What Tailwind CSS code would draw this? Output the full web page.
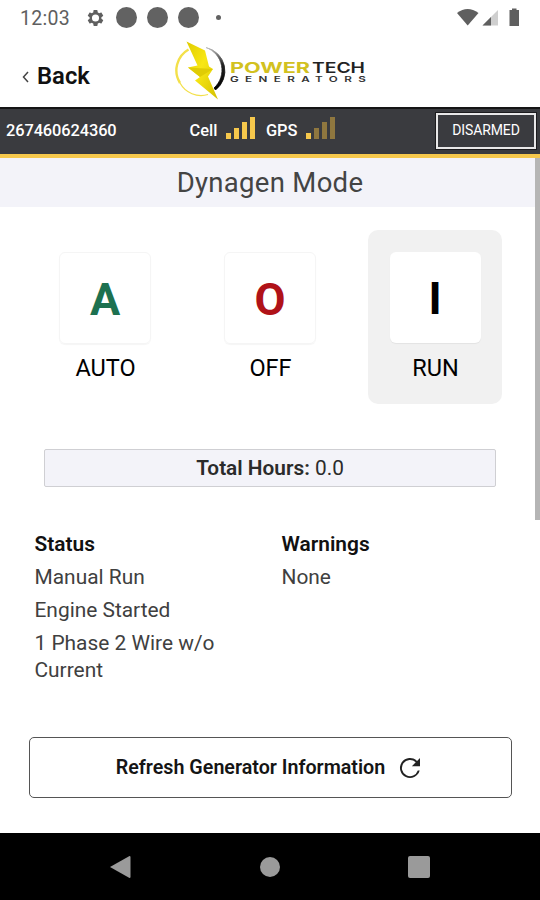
<!DOCTYPE html>
<html lang="en">
<head>
<meta charset="utf-8">
<title>Dynagen Mode</title>
<script src="https://cdn.jsdelivr.net/npm/@tailwindcss/browser@4"></script>
</head>
<body class="bg-white">
<div class="relative w-[540px] h-[900px] flex flex-col overflow-hidden bg-white font-['Roboto',sans-serif] text-[#2b2b2b]">
  <!-- status bar -->
  <div class="h-[36px] flex items-center pl-[20px] pr-[20px] text-[#5f5f5f] shrink-0">
    <span class="w-[66px] pt-[1px] text-[19.500px] leading-[36px] tracking-[0.300px] whitespace-nowrap">12:03</span>
    <svg class="w-[19px] h-[20px] mb-[1px]" viewBox="0 0 24 24" fill="#5f5f5f"><path fill-rule="evenodd" d="M19.430 12.980c.04-.32.07-.64.07-.98s-.03-.66-.07-.98l2.110-1.650c.19-.15.24-.42.12-.64l-2-3.460c-.12-.22-.39-.3-.61-.22l-2.490 1c-.52-.4-1.080-.73-1.690-.98l-.38-2.650A.49.49 0 0 0 14 2h-4c-.25 0-.46.18-.49.42l-.38 2.650c-.61.25-1.170.59-1.690.98l-2.490-1c-.23-.09-.49 0-.61.22l-2 3.460c-.13.22-.07.49.12.64l2.110 1.650c-.04.32-.07.65-.07.98s.03.66.07.98l-2.110 1.650c-.19.15-.24.42-.12.64l2 3.460c.12.22.39.3.61.22l2.490-1c.52.4 1.080.73 1.690.98l.38 2.650c.03.24.24.42.49.42h4c.25 0 .46-.18.49-.42l.38-2.650c.61-.25 1.170-.59 1.690-.98l2.490 1c.23.09.49 0 .61-.22l2-3.460c.12-.22.07-.49-.12-.64zM12 16.500a4.500 4.500 0 1 1 0-9 4.500 4.500 0 0 1 0 9z"/></svg>
    <div class="flex items-center gap-[10px] ml-[11px] mb-[1px]">
      <span class="size-[21px] rounded-full bg-[#626262]"></span>
      <span class="size-[21px] rounded-full bg-[#626262]"></span>
      <span class="size-[21px] rounded-full bg-[#626262]"></span>
      <span class="size-[5px] rounded-full bg-[#626262] ml-[7px]"></span>
    </div>
    <svg class="ml-auto w-[64px] h-[20px]" viewBox="456 8 64 20">
      <path d="M457 13Q467.500 5 478.500 13L467.700 25.500Z" fill="#5f5f5f"/>
      <path d="M482.500 25.500L498 10V25.500Z" fill="#cfcfcf"/>
      <path d="M482.500 25.500L491 17V25.500Z" fill="#5f5f5f"/>
      <path d="M509.500 10H512V8.500H516.500V10H519V26H509.500Z" fill="#5f5f5f"/>
    </svg>
  </div>
  <!-- header -->
  <div class="h-[71px] flex items-start pl-[21px] shrink-0">
    <div class="flex items-center w-[153px] h-[40px] mt-[21px]">
      <svg class="w-[10px] h-[16px]" viewBox="0 0 10 16" fill="none" stroke="#444" stroke-width="1.500"><path d="M7 3L2.500 8L7 13"/></svg>
      <span class="ml-[6px] text-[23.800px] font-semibold text-[#111]">Back</span>
    </div>
    <svg class="w-[196px] h-[66px]" viewBox="174 36 196 66">
      <defs>
        <linearGradient id="bolt" x1="0" y1="0" x2="1" y2="1"><stop offset="0" stop-color="#e0cc00"/><stop offset=".45" stop-color="#f8e715"/><stop offset="1" stop-color="#d4c000"/></linearGradient>
        <linearGradient id="arc" x1="0" y1="0" x2="0" y2="1"><stop offset="0" stop-color="#bbb"/><stop offset=".4" stop-color="#222"/><stop offset="1" stop-color="#000"/></linearGradient>
      </defs>
      <path d="M188.500 49.500A24 24 0 0 0 180 83" fill="none" stroke="#f3e04a" stroke-width="2.400"/>
      <path d="M180 83A24 24 0 0 0 208 94.500" fill="none" stroke="#f3e04a" stroke-width="1.200"/>
      <path d="M206 47.500A24 24 0 0 1 215.500 90L214 88A24 24 0 0 0 206 47.500Z" fill="url(#arc)" stroke="url(#arc)" stroke-width=".8"/>
      <path d="M186.500 41.500L205 50.500L209 66.500L213 69L208 76.500L218 99.500L195 80.500L200 77L188 67.500L197.500 65.500Z" fill="url(#bolt)"/>
      <path d="M188 67.500L213 69L200 77Z" fill="#e0cc05"/>
      <text x="230" y="72.500" textLength="80" lengthAdjust="spacingAndGlyphs" font-family="Inter,sans-serif" font-weight="700" font-size="14.500" fill="#d2c120">POWER</text>
      <text x="312" y="72.500" textLength="53" lengthAdjust="spacingAndGlyphs" font-family="Inter,sans-serif" font-weight="600" font-size="14.500" fill="#222">TECH</text>
      <text transform="translate(230 81.500) scale(1.500 1)" x="0" y="0" textLength="90.500" lengthAdjust="spacing" font-family="Inter,sans-serif" font-weight="600" font-size="7.800" fill="#333">GENERATORS</text>
    </svg>
  </div>
  <!-- device bar -->
  <div class="h-[51px] flex items-center bg-[#3a3b3f] border-t-2 border-t-[#151515] border-b-[4px] border-b-[#f6c84c] pl-[6px] pr-[4px] text-white shrink-0">
    <span class="w-[183.500px] text-[16.400px] font-medium tracking-[-0.100px]">267460624360</span>
    <span class="w-[36.500px] text-[16.400px] font-medium">Cell</span>
    <div class="flex items-end gap-[3px] w-[40px] h-[22px] mb-[7px]">
      <span class="w-[5px] h-[6px] bg-[#f6c84c]"></span>
      <span class="w-[5px] h-[11px] bg-[#f6c84c]"></span>
      <span class="w-[5px] h-[17px] bg-[#f6c84c]"></span>
      <span class="w-[5px] h-[22px] bg-[#f6c84c]"></span>
    </div>
    <span class="w-[40px] text-[16.400px] font-medium tracking-[-0.100px]">GPS</span>
    <div class="flex items-end gap-[3px] h-[22px] mb-[7px]">
      <span class="w-[5px] h-[6px] bg-[#f6c84c]"></span>
      <span class="w-[5px] h-[11px] bg-[#8f773f]"></span>
      <span class="w-[5px] h-[17px] bg-[#8f773f]"></span>
      <span class="w-[5px] h-[22px] bg-[#8f773f]"></span>
    </div>
    <div class="ml-auto mb-[2px] w-[100px] h-[36px] border-2 border-[#e8e8e8] outline outline-1 outline-[#1c1c1e] flex items-center justify-center text-[14px] tracking-[-0.100px]">DISARMED</div>
  </div>
  <!-- title -->
  <h1 class="h-[49px] bg-[#f3f3f9] text-center text-[27.500px] leading-[50px] tracking-[0.300px] text-[#444] shrink-0">Dynagen Mode</h1>
  <!-- modes -->
  <div class="flex gap-[31px] pl-[38px] pt-[23px] text-black shrink-0">
    <div class="w-[134px] h-[174px] flex flex-col items-center pt-[22px]">
      <div class="size-[92px] rounded-[6px] border border-[#f5f5f5] shadow-[0_1px_1px_rgba(0,0,0,0.04)] flex items-center justify-center pt-[3px] text-[45px] font-bold text-[#1d7150]">A</div>
      <span class="mt-[8px] pl-[1px] text-[23.500px] leading-[32px]">AUTO</span>
    </div>
    <div class="w-[134px] h-[174px] flex flex-col items-center pt-[22px]">
      <div class="size-[92px] rounded-[6px] border border-[#f5f5f5] shadow-[0_1px_1px_rgba(0,0,0,0.04)] flex items-center justify-center pt-[3px] text-[45px] font-bold text-[#b01218]">O</div>
      <span class="mt-[8px] pl-[1px] text-[23.500px] leading-[32px]">OFF</span>
    </div>
    <div class="w-[134px] h-[174px] flex flex-col items-center pt-[22px] rounded-[10px] bg-[#f1f1f1]">
      <div class="size-[91px] rounded-[6px] bg-white shadow-[0_1px_1px_rgba(0,0,0,0.06)] flex items-center justify-center pt-[3px] text-[45px] font-bold">I</div>
      <span class="mt-[9px] pl-[1px] text-[23.500px] leading-[32px]">RUN</span>
    </div>
  </div>
  <!-- hours -->
  <div class="mt-[45px] ml-[44px] w-[452px] h-[38px] border border-[#cfcfd3] rounded-[2px] bg-[#f3f3f9] text-center text-[20.800px] leading-[37px] shrink-0"><b class="font-semibold">Total Hours:</b> 0.0</div>
  <!-- status columns -->
  <div class="flex pl-[34.500px] mt-[44px] h-[206px] text-[20.900px] leading-[27px] text-[#404040] shrink-0">
    <div class="w-[247px] flex flex-col gap-[6px]">
      <b class="font-semibold text-[#111]">Status</b>
      <span>Manual Run</span>
      <span>Engine Started</span>
      <span class="w-[200px]">1 Phase 2 Wire w/o Current</span>
    </div>
    <div class="flex flex-col gap-[6px]">
      <b class="font-semibold text-[#111]">Warnings</b>
      <span>None</span>
    </div>
  </div>
  <button class="ml-[29px] w-[483px] h-[61px] border border-[#555] rounded-[5px] flex items-center justify-center text-[19.700px] font-semibold text-[#151515] shrink-0">
    <span>Refresh Generator Information</span>
    <svg class="ml-[10px] w-[30px] h-[30px]" viewBox="0 0 24 24" fill="#222"><path d="M17.650 6.350A8 8 0 1 0 19.730 14h-1.500A6.500 6.500 0 1 1 16.600 7.400L13.500 10.500H20V4z"/></svg>
  </button>
  <!-- navigation bar -->
  <div class="mt-auto h-[67px] bg-black shrink-0 flex items-center justify-between pl-[109px] pr-[110px]">
    <svg class="w-[22px] h-[24px]" viewBox="0 0 22 24"><path d="M1 12L20.500 1Q21.500 1 21.500 2V22Q21.500 23 20.500 23Z" fill="#9a9a9a"/></svg>
    <span class="size-[20px] rounded-full bg-[#9a9a9a]"></span>
    <span class="size-[22px] rounded-[2px] bg-[#9a9a9a]"></span>
  </div>
  <!-- scrollbar thumb overlay -->
  <div class="absolute right-0 top-[158px] w-[5px] h-[362px] bg-[#b5b5b5]"></div>
</div>
</body>
</html>
